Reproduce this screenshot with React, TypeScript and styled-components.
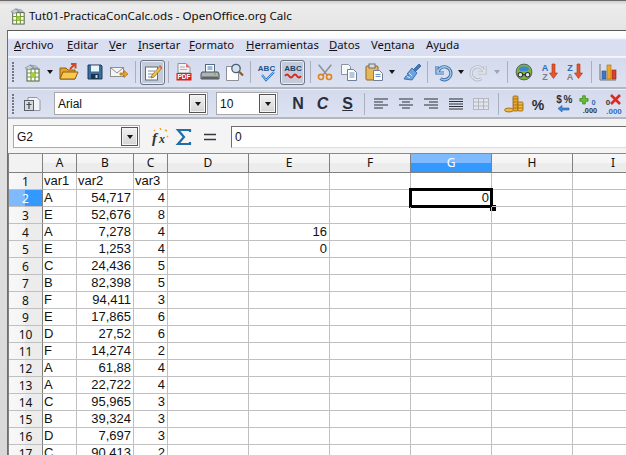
import React from "react";
import styled, { createGlobalStyle } from "styled-components";

const Global = createGlobalStyle`
  html, body {
    margin: 0;
    width: 626px;
    height: 455px;
    overflow: hidden;
    background: #d9d9d9;
  }
`;

const Frame = styled.div`
  width: 626px;
  height: 455px;
  overflow: hidden;
  display: flex;
  flex-direction: column;
  font-family: "Noto Sans", sans-serif;
  background: linear-gradient(180deg, #cfcfcf 0, #ececec 4px, #e4e4e4 30px, #d8d8d8 100%);
  border-top: 1px solid #6b6b6b;
  box-sizing: border-box;
`;

const TitleBar = styled.div`
  height: 29px;
  flex: none;
  display: flex;
  align-items: center;
  gap: 2px;
  padding-left: 8px;
  font-size: 11.6px;
  color: #0c0c0c;
`;

const Client = styled.div`
  flex: 1;
  min-height: 0;
  margin-left: 7px;
  width: 640px;
  border-top: 1px solid #5a5a5a;
  border-left: 1px solid #6e6e6e;
  display: flex;
  flex-direction: column;
  background: #f2f2f2;
`;

const MenuBar = styled.div`
  height: 26px;
  flex: none;
  display: flex;
  align-items: center;
  padding-left: 6px;
  padding-top: 2px;
  box-sizing: border-box;
  font-family: "Noto Sans", sans-serif;
  font-size: 11.3px;
  color: #101018;
  background: linear-gradient(180deg, #ffffff 0, #fafbfe 7px, #d9dff0 9px, #d9dff0 100%);
  border-bottom: 1px solid #f4f6fb;
`;

const MenuItem = styled.span<{ $w: number }>`
  width: ${(p) => p.$w}px;
  flex: none;
  white-space: nowrap;
`;

const Toolbar = styled.div<{ $h: number; $pt?: number }>`
  height: ${(p) => p.$h}px;
  padding-top: ${(p) => p.$pt ?? 0}px;
  flex: none;
  display: flex;
  align-items: center;
  box-sizing: border-box;
  background: linear-gradient(180deg, #d3daec 0, #dde2f2 100%);
  border-bottom: 2px solid #b4b7c0;
  box-shadow: inset 0 1px 0 #eef0f7;
`;

const Grip = styled.div`
  width: 10px;
  flex: none;
  height: 20px;
  margin-left: 2px;
  background-image: radial-gradient(circle at 1px 1px, #77787f 1px, transparent 1px);
  background-size: 2px 3px;
  background-repeat: repeat-y;
  background-position: 2px 0;
`;

const Slot = styled.div<{ $w: number; $active?: boolean; $left?: number }>`
  width: ${(p) => p.$w}px;
  height: 25px;
  margin-left: ${(p) => p.$left ?? 0}px;
  flex: none;
  box-sizing: border-box;
  display: flex;
  align-items: center;
  justify-content: center;
  border: 1px solid ${(p) => (p.$active ? "#6a7484" : "transparent")};
  border-radius: 3px;
  background: ${(p) => (p.$active ? "#c3cbd9" : "transparent")};
  box-shadow: ${(p) => (p.$active ? "inset 0 0 0 1px #e8ecf3" : "none")};
`;

const Sep = styled.div<{ $w: number }>`
  width: ${(p) => p.$w}px;
  flex: none;
  height: 22px;
  display: flex;
  justify-content: center;

  &::before {
    content: "";
    width: 1px;
    background: #a9afbd;
  }
`;

const Arrow = styled.div<{ $off?: boolean }>`
  width: 0;
  height: 0;
  border-left: 3.5px solid transparent;
  border-right: 3.5px solid transparent;
  border-top: 4px solid ${(p) => (p.$off ? "#a0a4ae" : "#15151a")};
`;

const Combo = styled.div<{ $w: number; $left: number; $h?: number }>`
  width: ${(p) => p.$w}px;
  height: ${(p) => p.$h ?? 23}px;
  margin-left: ${(p) => p.$left}px;
  flex: none;
  box-sizing: border-box;
  border: 1px solid #a9a9a9;
  background: #fff;
  display: flex;
  align-items: center;
  justify-content: space-between;
  padding-left: 3px;
  font-family: "Liberation Sans", sans-serif;
  font-size: 12px;
  color: #111;
`;

const ComboButton = styled.div`
  width: 17px;
  height: 19px;
  margin-right: 1px;
  box-sizing: border-box;
  border: 1px solid #555;
  box-shadow: inset 0 0 0 1px #f4f4f4;
  background: linear-gradient(180deg, #f2f2f2 0, #d4d4d4 100%);
  display: flex;
  align-items: center;
  justify-content: center;
`;

const Glyph = styled.span<{ $italic?: boolean; $under?: boolean }>`
  font-family: "Liberation Sans", sans-serif;
  font-weight: 700;
  font-size: 16px;
  color: #2b2f3a;
  font-style: ${(p) => (p.$italic ? "italic" : "normal")};
  text-decoration: ${(p) => (p.$under ? "underline" : "none")};
`;

const FormulaBar = styled.div`
  height: 35px;
  flex: none;
  box-sizing: border-box;
  display: flex;
  align-items: center;
  padding: 1px 0 0 5px;
  background: #f4f4f4;
  border-bottom: 1px solid #8a8a8a;
`;

const FormulaSlot = styled.div<{ $w: number; $left?: number }>`
  width: ${(p) => p.$w}px;
  margin-left: ${(p) => p.$left ?? 0}px;
  flex: none;
  display: flex;
  justify-content: center;
`;

const FormulaInput = styled.div`
  flex: 1;
  height: 22px;
  margin-left: 5px;
  box-sizing: border-box;
  background: #fff;
  border: 1px solid #dedede;
  border-top-color: #6e6e6e;
  border-left-color: #6e6e6e;
  padding-left: 3px;
  line-height: 20px;
  font-family: "Liberation Sans", sans-serif;
  font-size: 12px;
  color: #111;
`;

const Sheet = styled.div`
  display: grid;
  margin-left: 1px;
  box-shadow: -1px 0 0 #808080;
  grid-template-columns: 34px 34px 57px 34px 81px 81px 81px 81px 81px 81px;
  grid-template-rows: 19px;
  grid-auto-rows: 17px;
  background: #fff;
  font-family: "Liberation Sans", sans-serif;
  font-size: 13px;
  color: #111;
`;

const Corner = styled.div`
  box-sizing: border-box;
  background: #f2f2f2;
  border-right: 1px solid #808080;
  border-bottom: 1px solid #808080;
`;

const ColHead = styled.div<{ $on?: boolean }>`
  box-sizing: border-box;
  text-align: center;
  font-family: "Noto Sans", sans-serif;
  font-size: 12px;
  line-height: 18px;
  color: ${(p) => (p.$on ? "#fff" : "#111")};
  border-right: 1px solid ${(p) => (p.$on ? "#3d8fe0" : "#808080")};
  border-bottom: 1px solid #808080;
  background: ${(p) =>
    p.$on
      ? "linear-gradient(180deg, #7fbaff 0, #7fbaff 50%, #3399ff 50%, #3399ff 100%)"
      : "linear-gradient(180deg, #f8f8f8 0, #f4f4f4 50%, #ececec 50%, #ececec 100%)"};
`;

const RowHead = styled.div<{ $on?: boolean }>`
  box-sizing: border-box;
  text-align: center;
  font-family: "Noto Sans", sans-serif;
  font-size: 12px;
  line-height: 17px;
  color: ${(p) => (p.$on ? "#fff" : "#111")};
  border-right: 1px solid #808080;
  border-bottom: 1px solid #c0c0c0;
  background: ${(p) =>
    p.$on
      ? "linear-gradient(90deg, #7fbaff 0, #7fbaff 50%, #3399ff 50%, #3399ff 100%)"
      : "linear-gradient(90deg, #f8f8f8 0, #f4f4f4 50%, #ececec 50%, #ececec 100%)"};
`;

const Cell = styled.div<{ $num?: boolean; $cursor?: boolean }>`
  position: relative;
  box-sizing: border-box;
  min-width: 0;
  white-space: nowrap;
  padding: 0 2px 0 1px;
  line-height: 16px;
  text-align: ${(p) => (p.$num ? "right" : "left")};
  border-right: 1px solid #c0c0c0;
  border-bottom: 1px solid #c0c0c0;

  ${(p) =>
    p.$cursor
      ? `
    &::before {
      content: "";
      position: absolute;
      left: -2px;
      top: -2px;
      right: -2px;
      bottom: -2px;
      border: 3px solid #000;
    }
    &::after {
      content: "";
      position: absolute;
      right: -5px;
      bottom: -5px;
      width: 6px;
      height: 6px;
      background: #000;
    }
  `
      : ""}
`;

const Svg = ({ children, s = 20, v = 20 }: { children: React.ReactNode; s?: number; v?: number }) => (
  <svg width={s} height={s} viewBox={`0 0 ${v} ${v}`}>
    {children}
  </svg>
);

const SheetGlyph = () => (
  <>
    <rect x="5" y="7" width="12" height="12" fill="#fff" stroke="#4c5a44" />
    <path d="M5 11h12M5 15h12M9 7v12M13 7v12" stroke="#6f9a2c" strokeWidth="1.2" />
    <rect x="9" y="11" width="4" height="4" fill="#a6cf3c" />
    <path d="M3 6l5-3 4 2-5 3zM8 3l6 1 2 2-5 0z" fill="#c5ccd6" stroke="#7b8594" strokeWidth=".6" />
  </>
);

const icons: Record<string, React.ReactNode> = {
  newdoc: <Svg><SheetGlyph /></Svg>,
  open: (
    <Svg>
      <path d="M1 17V6h6l2 2h7v9z" fill="#e0a42c" stroke="#8f5f10" />
      <path d="M1 17l3-7h15l-3 7z" fill="#f8c94e" stroke="#8f5f10" />
      <path d="M11 7l5-5M12 2h4.500v4.500" fill="none" stroke="#d2491c" strokeWidth="2" />
    </Svg>
  ),
  save: (
    <Svg>
      <path d="M3 3h13l1 1v13H3z" fill="#3d6f9e" stroke="#1c3c5c" />
      <rect x="6" y="3.500" width="8" height="6" fill="#eef3f8" />
      <rect x="6" y="12" width="8" height="5" fill="#16344f" />
      <rect x="10.500" y="13" width="2" height="3" fill="#cfd9e4" />
    </Svg>
  ),
  mail: (
    <Svg>
      <rect x="1.500" y="5.500" width="13" height="9" fill="#f4f4f4" stroke="#8c8f96" />
      <path d="M2 6l6 5 6-5" fill="none" stroke="#8c8f96" />
      <path d="M11 11h4V8.500l4 3.500-4 3.500V13h-4z" fill="#f0a52a" stroke="#a86a10" strokeWidth=".7" />
    </Svg>
  ),
  edit: (
    <Svg>
      <rect x="2.500" y="5" width="12" height="13" fill="#fff" stroke="#5d6b7c" />
      <path d="M5 9h7M5 12h5M5 15h6" stroke="#7a8aa0" />
      <path d="M9 13l8-9 2 2-8 9-3 1z" fill="#f2c04a" stroke="#8a6420" strokeWidth=".7" />
      <path d="M16 4l1-1 2 2-1 2z" fill="#df5b5b" />
    </Svg>
  ),
  pdf: (
    <Svg>
      <path d="M4 1.500h8l4 4V11H4z" fill="#f4f4f6" stroke="#8d919b" />
      <path d="M6 5h5M6 7.500h7" stroke="#a8acb6" />
      <path d="M12 1.500l4 4h-4z" fill="#e56c6c" />
      <rect x="2.500" y="11" width="15" height="7.500" fill="#d8201c" />
      <text x="10" y="17" fontSize="6.500" fontWeight="700" fontFamily="Liberation Sans" fill="#fff" textAnchor="middle">PDF</text>
    </Svg>
  ),
  print: (
    <Svg>
      <rect x="5.500" y="2.500" width="9" height="8" fill="#fff" stroke="#546a82" />
      <path d="M7.500 5h5M7.500 7h5" stroke="#3f78b4" />
      <path d="M2 10h16l1 2v5H1v-5z" fill="#aeb3ba" stroke="#4b4f55" />
      <rect x="2" y="14.500" width="16" height="2.500" fill="#5f6368" />
      <rect x="14" y="11.500" width="2" height="1.500" fill="#6bc23a" />
    </Svg>
  ),
  preview: (
    <Svg>
      <path d="M2.500 4.500h9l3 3v11h-12z" fill="#fff" stroke="#8a8f99" />
      <circle cx="12" cy="6.500" r="4.200" fill="#cfe2f3" stroke="#4e5c6b" strokeWidth="1.300" />
      <path d="M15 9.500l4 4" stroke="#8a5a20" strokeWidth="2.200" />
    </Svg>
  ),
  spell: (
    <Svg>
      <text x="9.500" y="8.500" fontSize="8" fontWeight="700" fontFamily="Liberation Sans" fill="#24508c" textAnchor="middle">ABC</text>
      <path d="M5 13l4 5 8-8" fill="none" stroke="#2e79c8" strokeWidth="2.200" />
      <path d="M5 13l4 5 8-8" fill="none" stroke="#bcdcf8" strokeWidth=".7" />
    </Svg>
  ),
  auto: (
    <Svg>
      <text x="10" y="9" fontSize="8" fontWeight="700" fontFamily="Liberation Sans" fill="#24406c" textAnchor="middle">ABC</text>
      <path d="M2 14q2-3 4 0t4 0 4 0 4 0" fill="none" stroke="#d8261c" strokeWidth="1.800" />
    </Svg>
  ),
  cut: (
    <Svg>
      <path d="M3 2l9 11M17 2L8 13" stroke="#8e939c" strokeWidth="1.800" />
      <circle cx="5.500" cy="15.500" r="2.800" fill="none" stroke="#e0841c" strokeWidth="1.800" />
      <circle cx="14.500" cy="15.500" r="2.800" fill="none" stroke="#e0841c" strokeWidth="1.800" />
    </Svg>
  ),
  copy: (
    <Svg>
      <path d="M2.500 2.500h7l2 2v8h-9z" fill="#f7f8fa" stroke="#8b93a0" />
      <path d="M8.500 7.500h6l3 3v8h-9z" fill="#fff" stroke="#6f7f94" />
      <path d="M10.500 11h5M10.500 13h5M10.500 15h5" stroke="#6a94c4" />
    </Svg>
  ),
  paste: (
    <Svg>
      <rect x="2" y="4" width="12" height="14" rx="1" fill="#e7b85a" stroke="#8c6420" />
      <rect x="5" y="2" width="6" height="4" fill="#d9dce2" stroke="#6a6f78" />
      <path d="M9.500 8.500h6l3 3v7h-9z" fill="#fff" stroke="#6f7f94" />
      <path d="M11.500 12.500h5M11.500 14.500h5" stroke="#6a94c4" />
    </Svg>
  ),
  brush: (
    <Svg>
      <path d="M11 8l6-6 2 2-6 6z" fill="#3f78c0" stroke="#24508c" strokeWidth=".7" />
      <path d="M10 6l5 5-5 7-8-1 2-3 3-1-2-1z" fill="#6ca4e0" stroke="#2f5f9f" strokeWidth=".8" />
      <path d="M7 11l3 3M5 14l3 2" stroke="#d6e8fa" />
    </Svg>
  ),
  undo: (
    <Svg>
      <path d="M4 4v7h7M5 10a6.500 6.500 0 1 1 2.500 6.500" fill="none" stroke="#3a6ea5" strokeWidth="3.200" />
      <path d="M4 4v7h7M5 10a6.500 6.500 0 1 1 2.500 6.500" fill="none" stroke="#a8cbec" strokeWidth="1.300" />
    </Svg>
  ),
  redo: (
    <Svg>
      <path d="M16 4v7H9M15 10a6.500 6.500 0 1 0-2.500 6.500" fill="none" stroke="#b8bcc6" strokeWidth="3.200" />
      <path d="M16 4v7H9M15 10a6.500 6.500 0 1 0-2.500 6.500" fill="none" stroke="#e4e6ec" strokeWidth="1.300" />
    </Svg>
  ),
  nav: (
    <Svg s={18}>
      <circle cx="10" cy="10" r="8.800" fill="#7fb23a" stroke="#4c5a60" />
      <path d="M4 6q6-5 12 0l-2 3H6z" fill="#3f88d0" />
      <circle cx="6" cy="13" r="2.500" fill="#e6eaf0" stroke="#30343a" strokeWidth="1.200" />
      <circle cx="14" cy="13" r="2.500" fill="#e6eaf0" stroke="#30343a" strokeWidth="1.200" />
      <path d="M8 13h4" stroke="#30343a" strokeWidth="1.400" />
    </Svg>
  ),
  az: (
    <Svg>
      <text x="6" y="9" fontSize="9" fontWeight="700" fontFamily="Liberation Sans" fill="#2f6cb8" textAnchor="middle">A</text>
      <text x="6" y="18" fontSize="9" fontWeight="700" fontFamily="Liberation Sans" fill="#7c8088" textAnchor="middle">Z</text>
      <path d="M13 2h3v9h2.500l-4 5.500-4-5.500H13z" fill="#e8552a" stroke="#a83410" strokeWidth=".6" />
    </Svg>
  ),
  za: (
    <Svg>
      <text x="6" y="9" fontSize="9" fontWeight="700" fontFamily="Liberation Sans" fill="#2f6cb8" textAnchor="middle">Z</text>
      <text x="6" y="18" fontSize="9" fontWeight="700" fontFamily="Liberation Sans" fill="#7c8088" textAnchor="middle">A</text>
      <path d="M13 2h3v9h2.500l-4 5.500-4-5.500H13z" fill="#e8552a" stroke="#a83410" strokeWidth=".6" />
    </Svg>
  ),
  chart: (
    <Svg>
      <path d="M2 2v16h16" fill="none" stroke="#6b6f78" />
      <rect x="4" y="9" width="4" height="8" fill="#3f78c0" stroke="#24508c" strokeWidth=".6" />
      <rect x="9" y="3" width="4" height="14" fill="#f0a52a" stroke="#a86a10" strokeWidth=".6" />
      <rect x="14" y="8" width="4" height="9" fill="#d8412c" stroke="#8e2414" strokeWidth=".6" />
    </Svg>
  ),
  styles: (
    <Svg>
      <path d="M6 3.500h9l3 3v10H6z" fill="#f2f3f6" stroke="#9398a2" />
      <rect x="2.500" y="6.500" width="9" height="10" fill="#d6d9e0" stroke="#5c6069" />
      <path d="M7 8v7M4.500 10.500h5" stroke="#44484f" strokeWidth="1.200" />
    </Svg>
  ),
  left: <Svg><path d="M3 5h14M3 8h9M3 11h14M3 14h9" stroke="#2c3038" strokeWidth="1.100" /></Svg>,
  center: <Svg><path d="M3 5h14M6 8h8M3 11h14M6 14h8" stroke="#2c3038" strokeWidth="1.100" /></Svg>,
  right: <Svg><path d="M3 5h14M8 8h9M3 11h14M8 14h9" stroke="#2c3038" strokeWidth="1.100" /></Svg>,
  justify: <Svg><path d="M3 5h14M3 7.500h14M3 10h14M3 12.500h14M3 15h14" stroke="#2c3038" strokeWidth="1.100" /></Svg>,
  merge: (
    <Svg>
      <rect x="2.500" y="4.500" width="15" height="11" fill="#e2e5ed" stroke="#b4b7bf" />
      <path d="M2.500 8h15M2.500 12h15M7.500 4.500v11M12.500 4.500v11" stroke="#b4b7bf" />
    </Svg>
  ),
  coins: (
    <Svg>
      <rect x="9" y="2" width="5" height="15" rx="1" fill="#e8a830" stroke="#96620e" strokeWidth=".8" />
      <rect x="14" y="8" width="5" height="9" rx="1" fill="#f0b840" stroke="#96620e" strokeWidth=".8" />
      <ellipse cx="5" cy="16" rx="4.500" ry="2" fill="#f0b840" stroke="#96620e" strokeWidth=".8" />
      <path d="M9 5h5M9 8h5M9 11h5M9 14h5M14 11h5M14 14h5" stroke="#96620e" strokeWidth=".7" />
    </Svg>
  ),
  percent: (
    <Svg>
      <text x="10" y="15.500" fontSize="14" fontWeight="700" fontFamily="Liberation Sans" fill="#2c3038" textAnchor="middle">%</text>
    </Svg>
  ),
  money: (
    <Svg s={22} v={22}>
      <text x="6" y="10" fontSize="10" fontWeight="700" fontFamily="Liberation Sans" fill="#2c3038" textAnchor="middle">$</text>
      <text x="15" y="10" fontSize="10" fontWeight="700" fontFamily="Liberation Sans" fill="#2c3038" textAnchor="middle">%</text>
      <path d="M16 15H9v-2.500L5 15.500l4 3.500V17h7z" fill="#3f88d8" stroke="#1f5ea8" strokeWidth=".6" />
    </Svg>
  ),
  addDec: (
    <Svg s={24} v={24}>
      <path d="M5 3h3v3h3v3H8v3H5V9H2V6h3z" fill="#68c030" stroke="#2e7a10" strokeWidth=".7" />
      <text x="17" y="13" fontSize="8" fontWeight="700" fontFamily="Liberation Sans" fill="#2f6cb8" textAnchor="middle">0</text>
      <text x="13" y="22" fontSize="8" fontWeight="700" fontFamily="Liberation Sans" fill="#30343a" textAnchor="middle">.000</text>
    </Svg>
  ),
  delDec: (
    <Svg s={24} v={24}>
      <text x="6" y="13" fontSize="8" fontWeight="700" fontFamily="Liberation Sans" fill="#30343a" textAnchor="middle">0</text>
      <text x="12" y="22" fontSize="8" fontWeight="700" fontFamily="Liberation Sans" fill="#2f6cb8" textAnchor="middle">.000</text>
      <path d="M9 3l9 9M18 3l-9 9" stroke="#e0281c" strokeWidth="2.600" />
    </Svg>
  ),
  fx: (
    <Svg s={22} v={22}>
      <text x="3" y="17" fontSize="15" fontStyle="italic" fontWeight="700" fontFamily="Liberation Serif" fill="#30343a">f</text>
      <text x="10" y="17" fontSize="12" fontStyle="italic" fontWeight="700" fontFamily="Liberation Serif" fill="#30343a">x</text>
      <path d="M5 4l1 1M11 2l1 2M16 4l2 1M18 10l1 1" stroke="#e0a820" strokeWidth="1.400" />
    </Svg>
  ),
  sigma: (
    <Svg>
      <path d="M16 5V3H4l6 7-6 7h12v-2" fill="none" stroke="#1f6ea8" strokeWidth="2.200" />
    </Svg>
  ),
  equals: <Svg><path d="M4 7.500h12M4 12.500h12" stroke="#33373e" strokeWidth="1.700" /></Svg>,
  partial: <Svg><path d="M7 5h5M7 10h5M7 15h5" stroke="#2f6cb8" strokeWidth="2" /></Svg>,
};

type Item =
  | { kind: "icon"; w: number; icon: string; active?: boolean }
  | { kind: "drop"; w: number; off?: boolean }
  | { kind: "sep"; w: number };

const i = (w: number, icon: string, active?: boolean): Item => ({ kind: "icon", w, icon, active });
const d = (w: number, off?: boolean): Item => ({ kind: "drop", w, off });
const s = (w: number): Item => ({ kind: "sep", w });

const mainTools: Item[] = [
  i(24, "newdoc"), d(12), i(26, "open"), i(25, "save"), i(24, "mail"), s(9),
  i(25, "edit", true), s(6), i(26, "pdf"), i(25, "print"), i(24, "preview"), s(8),
  i(26, "spell"), i(25, "auto", true), s(10), i(20, "cut"), i(28, "copy"), i(22, "paste"), d(14),
  i(26, "brush"), s(4), i(28, "undo"), d(8), i(28, "redo"), d(8, true), s(12),
  i(22, "nav"), i(28, "az"), i(22, "za"), s(12), i(22, "chart"), i(20, "partial"),
];

const formatTools: Item[] = [
  i(25, "left"), i(25, "center"), i(25, "right"), i(25, "justify"), i(26, "merge"), s(8),
  i(24, "coins"), i(24, "percent"), i(27, "money"), i(24, "addDec"), i(26, "delDec"),
];

const Tools = ({ items }: { items: Item[] }) => (
  <>
    {items.map((item, n) => {
      if (item.kind === "sep") return <Sep key={n} $w={item.w} />;
      if (item.kind === "drop")
        return (
          <Slot key={n} $w={item.w}>
            <Arrow $off={item.off} />
          </Slot>
        );
      return (
        <Slot key={n} $w={item.w} $active={item.active}>
          {icons[item.icon]}
        </Slot>
      );
    })}
  </>
);

const menus: [React.ReactNode, number][] = [
  [<><u>A</u>rchivo</>, 53],
  [<><u>E</u>ditar</>, 42],
  [<><u>V</u>er</>, 29],
  [<><u>I</u>nsertar</>, 51],
  [<><u>F</u>ormato</>, 57],
  [<><u>H</u>erramientas</>, 83],
  [<><u>D</u>atos</>, 42],
  [<>Ve<u>n</u>tana</>, 55],
  [<>Ay<u>u</u>da</>, 50],
];

const columns = ["A", "B", "C", "D", "E", "F", "G", "H", "I"];

const rows: [string, string, string][] = [
  ["var1", "var2", "var3"],
  ["A", "54,717", "4"],
  ["E", "52,676", "8"],
  ["A", "7,278", "4"],
  ["E", "1,253", "4"],
  ["C", "24,436", "5"],
  ["B", "82,398", "5"],
  ["F", "94,411", "3"],
  ["E", "17,865", "6"],
  ["D", "27,52", "6"],
  ["F", "14,274", "2"],
  ["A", "61,88", "4"],
  ["A", "22,722", "4"],
  ["C", "95,965", "3"],
  ["B", "39,324", "3"],
  ["D", "7,697", "3"],
  ["C", "90,413", "2"],
];

const extras: Record<string, string> = { "2-G": "0", "4-E": "16", "5-E": "0" };

const App = () => (
  <Frame>
    <Global />
    <TitleBar>
      <Svg s={19}><SheetGlyph /></Svg>
      Tut01-PracticaConCalc.ods - OpenOffice.org Calc
    </TitleBar>
    <Client>
      <MenuBar>
        {menus.map(([label, w], n) => (
          <MenuItem key={n} $w={w}>{label}</MenuItem>
        ))}
      </MenuBar>
      <Toolbar $h={32}>
        <Grip />
        <Tools items={mainTools} />
      </Toolbar>
      <Toolbar $h={30} $pt={1}>
        <Grip />
        <Slot $w={24}>{icons.styles}</Slot>
        <Combo $w={154} $left={10}>
          Arial
          <ComboButton><Arrow /></ComboButton>
        </Combo>
        <Combo $w={62} $left={8}>
          10
          <ComboButton><Arrow /></ComboButton>
        </Combo>
        <Slot $w={24} $left={8}><Glyph>N</Glyph></Slot>
        <Slot $w={25}><Glyph $italic>C</Glyph></Slot>
        <Slot $w={25}><Glyph $under>S</Glyph></Slot>
        <Sep $w={8} />
        <Tools items={formatTools} />
      </Toolbar>
      <FormulaBar>
        <Combo $w={127} $left={0}>
          G2
          <ComboButton><Arrow /></ComboButton>
        </Combo>
        <FormulaSlot $w={28} $left={6}>{icons.fx}</FormulaSlot>
        <FormulaSlot $w={20}>{icons.sigma}</FormulaSlot>
        <FormulaSlot $w={32}>{icons.equals}</FormulaSlot>
        <FormulaInput>0</FormulaInput>
      </FormulaBar>
      <Sheet>
        <Corner />
        {columns.map((c) => (
          <ColHead key={c} $on={c === "G"}>{c}</ColHead>
        ))}
        {rows.map((row, r) => (
          <React.Fragment key={r}>
            <RowHead $on={r === 1}>{r + 1}</RowHead>
            <Cell>{row[0]}</Cell>
            <Cell $num={r > 0}>{row[1]}</Cell>
            <Cell $num={r > 0}>{row[2]}</Cell>
            {columns.slice(3).map((c) => (
              <Cell key={c} $num $cursor={r === 1 && c === "G"}>
                {extras[`${r + 1}-${c}`]}
              </Cell>
            ))}
          </React.Fragment>
        ))}
      </Sheet>
    </Client>
  </Frame>
);

export default App;
